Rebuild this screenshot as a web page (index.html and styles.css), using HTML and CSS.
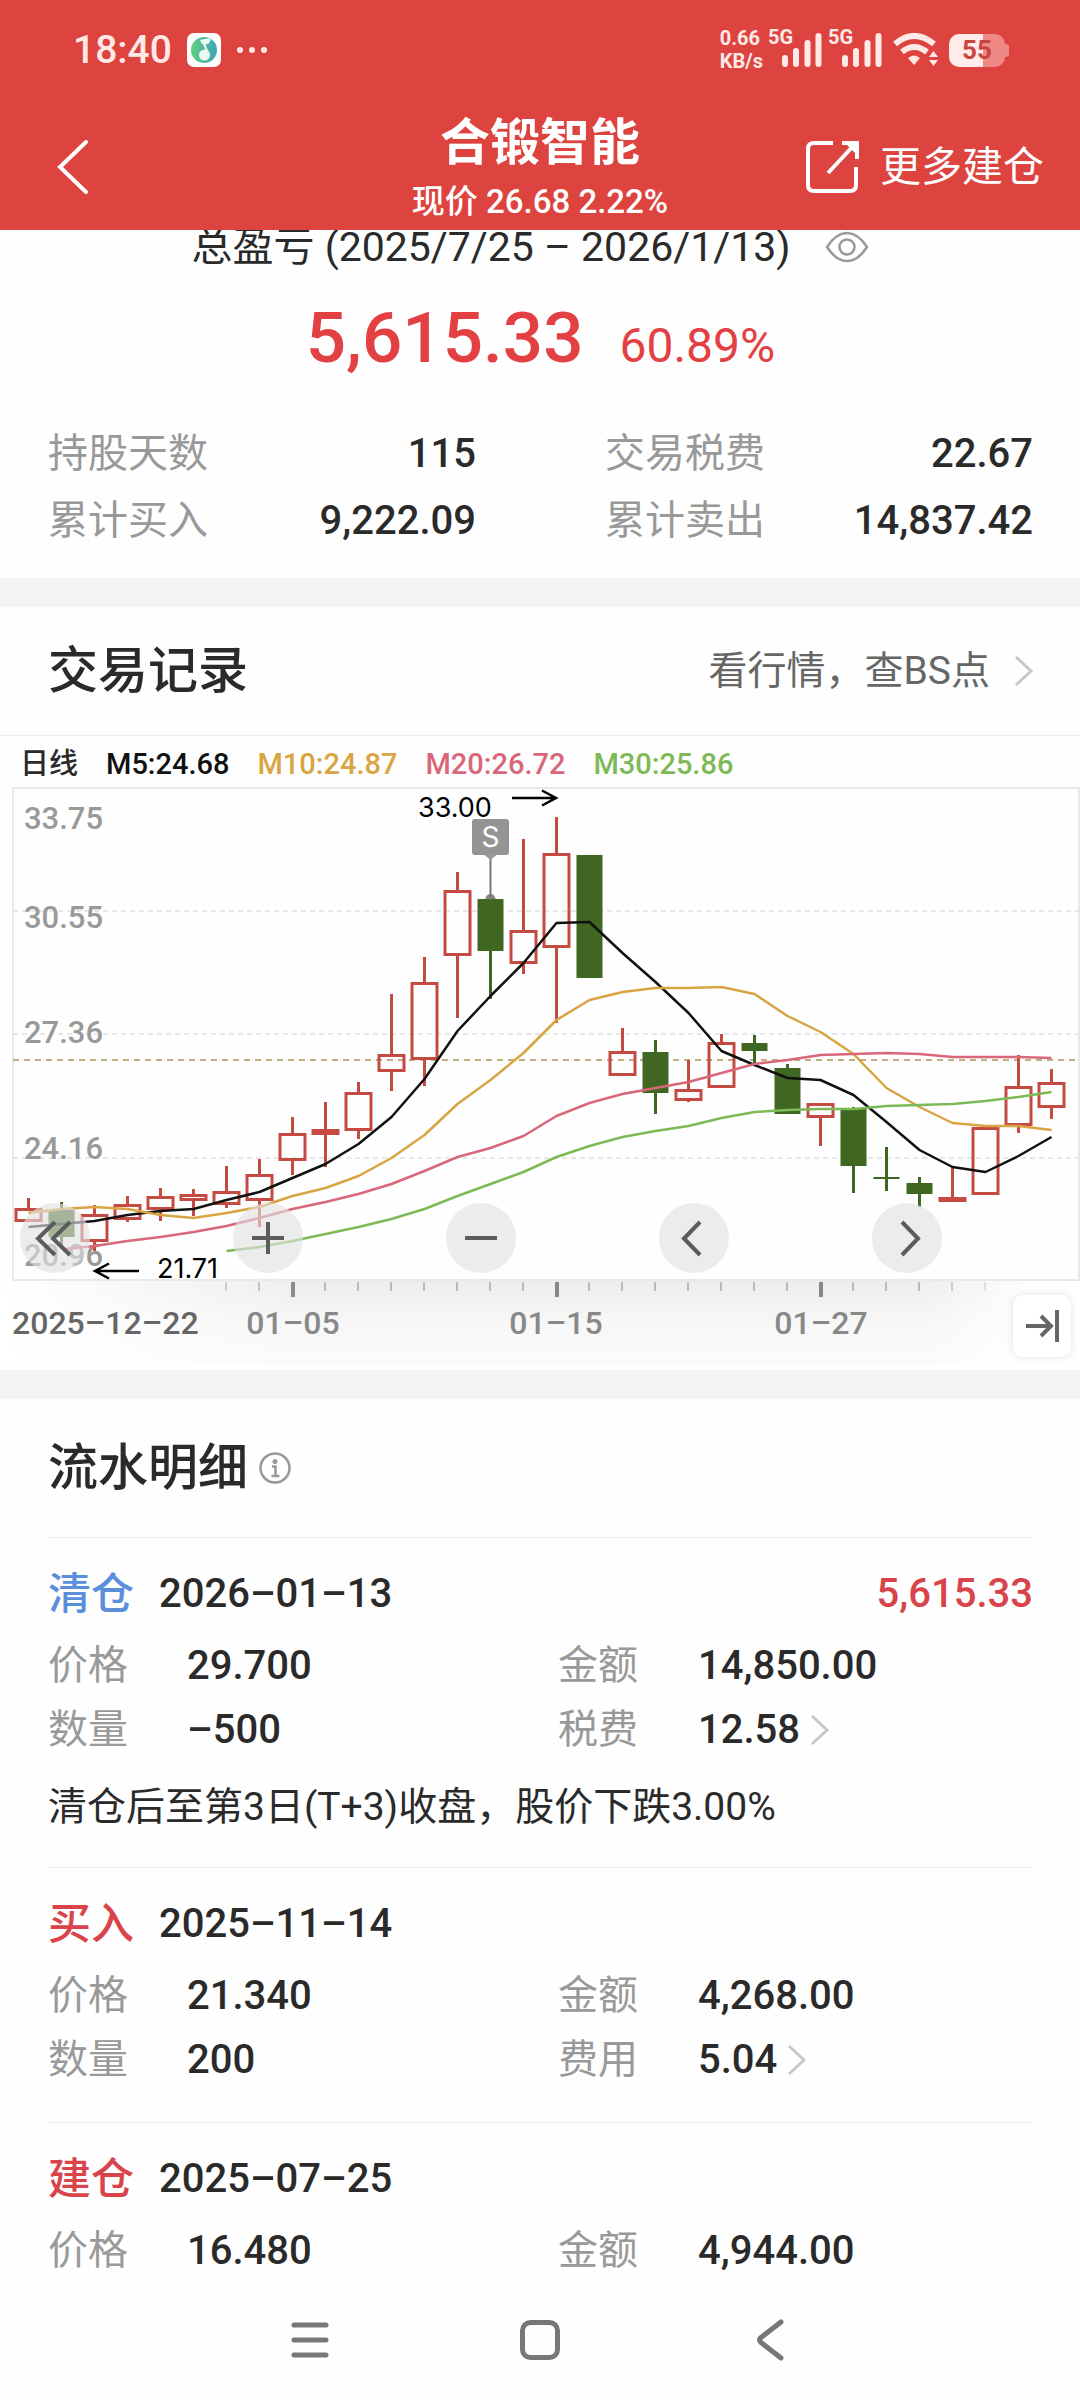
FILE: index.html
```html
<!DOCTYPE html>
<html lang="zh-CN">
<head>
<meta charset="utf-8">
<meta name="viewport" content="width=device-width, initial-scale=1">
<title>合锻智能</title>
<link rel="stylesheet" href="styles.css">
</head>
<body>
<header class="top">
  <div class="status">
    <span class="clock">18:40</span>
    <svg class="music" width="34" height="34" viewBox="0 0 34 34" aria-hidden="true">
      <defs><linearGradient id="disc" x1="0" x2="1"><stop offset="0" stop-color="#62cf80"/><stop offset="1" stop-color="#3fa3b8"/></linearGradient></defs>
      <rect width="34" height="34" rx="7" fill="#fff"/>
      <circle cx="17" cy="17" r="13" fill="url(#disc)"/>
      <path d="M23 6l-2 4-4 1 4 9" fill="none" stroke="#eafaf2" stroke-width="2"/>
      <path d="M13 7l10-2-3 5-5 1z" fill="#eafaf2"/>
      <circle cx="17.500" cy="22" r="5.500" fill="#eafaf2"/>
    </svg>
    <svg class="dots" width="30" height="8" viewBox="0 0 30 8" aria-hidden="true"><g fill="#ffe9e7"><circle cx="3" cy="4" r="3"/><circle cx="15" cy="4" r="3"/><circle cx="27" cy="4" r="3"/></g></svg>
    <span class="rate"><span>0.66</span><span>KB/s</span></span>
    <span class="cell">5G</span>
    <svg class="bars" width="40" height="34" viewBox="0 0 40 34" aria-hidden="true"><path d="M3 25v6M14 18v13M25.500 10v21M36.500 3v28" stroke="#ffe9e7" stroke-width="6" stroke-linecap="round"/></svg>
    <span class="cell second">5G</span>
    <svg class="bars" width="40" height="34" viewBox="0 0 40 34" aria-hidden="true"><path d="M3 25v6M14 18v13M25.500 10v21M36.500 3v28" stroke="#ffe9e7" stroke-width="6" stroke-linecap="round"/></svg>
    <svg class="wifi" width="46" height="34" viewBox="0 0 46 34" aria-hidden="true">
      <path d="M2 11q19-16 39 0M9 19q12-10 25 0" fill="none" stroke="#ffe9e7" stroke-width="6"/>
      <path d="M15 25q6-5 12 0l-6 7zM36 24l4.500-6 4.500 6zM36 27l4.500 6 4.500-6z" fill="#ffe9e7"/>
    </svg>
    <span class="battery">55</span>
  </div>
  <div class="titlebar">
    <button class="back" type="button" aria-label="返回"><svg width="34" height="58" viewBox="0 0 34 58"><path d="M30 4L4 29l26 25" fill="none" stroke="#fff" stroke-width="4" stroke-linecap="round"/></svg></button>
    <div class="name">
      <h1>合锻智能</h1>
      <p>现价 26.68 2.22%</p>
    </div>
    <a class="more" href="#more">
      <svg width="54" height="54" viewBox="0 0 54 54" aria-hidden="true"><g fill="none" stroke="#fff" stroke-width="4"><path d="M27 3H8q-6 0-6 6v36q0 6 6 6h36q6 0 6-6V27"/><path d="M36 3h15v16M50 3L22 33"/></g><path d="M38 2h14v14z" fill="#fff"/></svg>
      <span>更多建仓</span>
    </a>
  </div>
</header>

<main>
  <section class="summary">
    <div class="period">
      <h2>总盈亏 (2025/7/25 – 2026/1/13)</h2>
      <button type="button" aria-label="隐藏金额"><svg width="44" height="32" viewBox="0 0 44 32"><g fill="none" stroke="#999" stroke-width="2.500"><path d="M2 16Q11 2 22 2t20 14Q33 30 22 30T2 16z"/><circle cx="22" cy="16" r="7.500"/></g></svg></button>
    </div>
    <p class="profit"><strong>5,615.33</strong><span>60.89%</span></p>
    <dl class="stats">
      <div><dt>持股天数</dt><dd>115</dd></div>
      <div><dt>交易税费</dt><dd>22.67</dd></div>
      <div><dt>累计买入</dt><dd>9,222.09</dd></div>
      <div><dt>累计卖出</dt><dd>14,837.42</dd></div>
    </dl>
  </section>

  <section class="records">
    <div class="section-head ruled">
      <h2>交易记录</h2>
      <a class="quote" href="#quote"><span>看行情，查BS点</span><svg width="20" height="32" viewBox="0 0 20 32" aria-hidden="true"><path d="M2 2l15 14L2 30" fill="none" stroke="#c8c8c8" stroke-width="3"/></svg></a>
    </div>
    <div class="legend"><span>日线</span><span class="m5">M5:24.68</span><span class="m10">M10:24.87</span><span class="m20">M20:26.72</span><span class="m30">M30:25.86</span></div>
    <div class="chart">
      <svg class="plot" viewBox="0 786 1080 584" role="img" aria-label="日线K线图">
        <defs>
          <linearGradient id="axis" x1="0" x2="0" y1="0" y2="1"><stop offset="0" stop-color="#eee"/><stop offset=".5" stop-color="#f7f7f7"/><stop offset="1" stop-color="#fbfbfb"/></linearGradient>
          <linearGradient id="fadeL"><stop offset="0" stop-color="#fff"/><stop offset="1" stop-color="#fff" stop-opacity="0"/></linearGradient>
          <linearGradient id="fadeR"><stop offset="0" stop-color="#fff" stop-opacity="0"/><stop offset="1" stop-color="#fff"/></linearGradient>
        </defs>
        <rect x="0" y="1281" width="1080" height="83" fill="url(#axis)"/>
        <path d="M259 1282v9M325 1282v9M358 1282v9M391 1282v9M424 1282v9M457 1282v9M490 1282v9M523 1282v9M589 1282v9M622 1282v9M655 1282v9M688 1282v9M721 1282v9M754 1282v9M787 1282v9M853 1282v9M886 1282v9M919 1282v9M952 1282v9M985 1282v9M226 1282v9" stroke="#bbb" stroke-width="2"/>
        <path d="M293 1282v15M557 1282v15M821 1282v15" stroke="#888" stroke-width="4"/>
        <rect x="0" y="1281" width="300" height="83" fill="url(#fadeL)"/>
        <rect x="920" y="1281" width="120" height="83" fill="url(#fadeR)"/>
        <rect x="1040" y="1281" width="40" height="83" fill="#fff"/>
        <rect x="13" y="788" width="1066" height="492" fill="none" stroke="#e9e9e9" stroke-width="2"/>
        <path d="M13 911h1066M13 1034h1066M13 1158h1066" stroke="#e0e0e0" stroke-width="1.500" stroke-dasharray="5 4"/>
        <path d="M13 1060h1066" stroke="#bfae80" stroke-width="2" stroke-dasharray="6 5"/>
        <g class="price"><text x="24" y="829">33.75</text><text x="24" y="928">30.55</text><text x="24" y="1043">27.36</text><text x="24" y="1159">24.16</text><text x="24" y="1266">20.96</text></g>
        <g fill="none" stroke="#c44a42" stroke-width="3">
          <path d="M28.500 1198v10M94.500 1205v9M94.500 1242v9M127.500 1196v8M127.500 1220v2M160.500 1188v8M160.500 1210v11M193.500 1189v5M193.500 1201v15M226.500 1166v25M226.500 1205v3M259.500 1159v15M259.500 1201v26M292.500 1117v16M292.500 1161v14M325.500 1102v65M358.500 1082v10M358.500 1131v8M391.500 994v60M391.500 1072v19M424.500 957v25M424.500 1060v26M457.500 872v18M457.500 956v62M523.500 839v91M523.500 964v10M556.500 817v36M556.500 948v75M622.500 1028v23M688.500 1060v29M688.500 1101v1M721.500 1034v8M820.500 1118v28M952.500 1167v30M1018.500 1055v31M1018.500 1126v7M1051.500 1069v13M1051.500 1108v11"/>
          <path d="M16 1209.500h25v11h-25zM82 1215.500h25v25h-25zM115 1205.500h25v13h-25zM148 1197.500h25v11h-25zM181 1195.500h25v4h-25zM214 1192.500h25v11h-25zM247 1175.500h25v24h-25zM280 1134.500h25v25h-25zM313 1130.500h25v3h-25zM346 1093.500h25v36h-25zM379 1055.500h25v15h-25zM412 983.500h25v75h-25zM445 891.500h25v63h-25zM511 931.500h25v31h-25zM544 854.500h25v92h-25zM610 1052.500h25v22h-25zM676 1090.500h25v9h-25zM709 1043.500h25v43h-25zM808 1104.500h25v12h-25zM940 1198.500h25v2h-25zM973 1128.500h25v65h-25zM1006 1087.500h25v37h-25zM1039 1083.500h25v23h-25z"/>
        </g>
        <circle cx="490.500" cy="899" r="5" fill="#888"/>
        <path d="M61.500 1202v45M490.500 951v48M655.500 1040v74M754.500 1035v28M787.500 1064v4M853.500 1107v86M886.500 1147v44M919.500 1177v30" stroke="#3f6722" stroke-width="3"/>
        <path d="M48.500 1210h26v27h-26zM477.500 899h26v52h-26zM576.500 855h26v123h-26zM642.500 1052h26v41h-26zM741.500 1043h26v8h-26zM774.500 1068h26v46h-26zM840.500 1109h26v57h-26zM873.500 1177h26v2h-26zM906.500 1183h26v11h-26z" fill="#3f6722"/>
        <g fill="none" stroke-width="2.500" stroke-linejoin="round">
          <polyline stroke="#111" points="28.500,1227 61.500,1224 94.500,1221 127.500,1215 160.500,1211 193.500,1209 226.500,1200 259.500,1192 292.500,1178 325.500,1164 358.500,1144 391.500,1117 424.500,1079 457.500,1031 490.500,996 523.500,963 556.500,923 589.500,922 622.500,953 655.500,982 688.500,1013 721.500,1051 754.500,1065 787.500,1078 820.500,1080 853.500,1095 886.500,1122 919.500,1150 952.500,1167 985.500,1172 1018.500,1156 1051.500,1137"/>
          <polyline stroke="#d9a441" points="28.500,1213 61.500,1209 94.500,1207 127.500,1209 160.500,1215 193.500,1218 226.500,1213 259.500,1207 292.500,1196 325.500,1188 358.500,1176 391.500,1158 424.500,1135 457.500,1104 490.500,1080 523.500,1053 556.500,1020 589.500,1000 622.500,992 655.500,988 688.500,988 721.500,987 754.500,994 787.500,1016 820.500,1032 853.500,1054 886.500,1088 919.500,1107 952.500,1123 985.500,1126 1018.500,1126 1051.500,1130"/>
          <polyline stroke="#d9677a" points="66,1249 94.500,1246 127.500,1241 160.500,1237 193.500,1232 226.500,1226 259.500,1218 292.500,1209 325.500,1202 358.500,1194 391.500,1184 424.500,1171 457.500,1157 490.500,1148 523.500,1136 556.500,1116 589.500,1103 622.500,1094 655.500,1088 688.500,1082 721.500,1073 754.500,1064 787.500,1060 820.500,1055 853.500,1054 886.500,1053 919.500,1054 952.500,1057 985.500,1057 1018.500,1057 1051.500,1058"/>
          <polyline stroke="#7dba57" points="226.500,1251 259.500,1247 292.500,1241 325.500,1234 358.500,1227 391.500,1219 424.500,1209 457.500,1196 490.500,1184 523.500,1172 556.500,1157 589.500,1146 622.500,1137 655.500,1131 688.500,1126 721.500,1118 754.500,1112 787.500,1110 820.500,1109 853.500,1109 886.500,1106 919.500,1105 952.500,1104 985.500,1101 1018.500,1097 1051.500,1092"/>
        </g>
        <path d="M490.500 856v44" stroke="#777" stroke-width="2"/>
        <path d="M482 853h17l-8.500 7z" fill="#999"/>
        <rect x="472" y="819" width="37" height="36" rx="3" fill="#949494"/>
        <text class="sell" x="490.500" y="847">S</text>
        <g class="extreme"><text x="418" y="817">33.00</text><text x="157" y="1278">21.71</text></g>
        <path d="M512 798h44M542 790.500l14 7.500-14 7.500M139 1271H95M109 1263.500l-14 7.500 14 7.500" fill="none" stroke="#000" stroke-width="2.500"/>
        <g class="dates"><text class="first" x="12" y="1334">2025–12–22</text><text class="mid" x="293" y="1334">01–05</text><text class="mid" x="556" y="1334">01–15</text><text class="mid" x="821" y="1334">01–27</text></g>
      </svg>
      <div class="controls">
        <button type="button" aria-label="最早"><svg width="70" height="70" viewBox="0 0 70 70"><path d="M35 19L18 35.500 35 52M50 19L33 35.500 50 52"/></svg></button>
        <button type="button" aria-label="放大"><svg width="70" height="70" viewBox="0 0 70 70"><path d="M19 35h32M35 19v32"/></svg></button>
        <button type="button" aria-label="缩小"><svg width="70" height="70" viewBox="0 0 70 70"><path d="M19 35h32"/></svg></button>
        <button type="button" aria-label="向左"><svg width="70" height="70" viewBox="0 0 70 70"><path d="M41 19L25 35.500 41 52"/></svg></button>
        <button type="button" aria-label="向右"><svg width="70" height="70" viewBox="0 0 70 70"><path d="M30 19l16 16.500L30 52"/></svg></button>
      </div>
      <button class="latest" type="button" aria-label="最新"><svg width="34" height="36" viewBox="0 0 34 36"><path d="M1 18h25M16 8l10 10-10 10M32 2v32" fill="none" stroke="#666" stroke-width="4"/></svg></button>
    </div>
  </section>

  <section class="flow">
    <div class="section-head">
      <h2>流水明细</h2>
      <button class="info" type="button" aria-label="说明"><svg width="34" height="34" viewBox="0 0 34 34"><circle cx="17" cy="17" r="14.500" fill="none" stroke="#999" stroke-width="2.500"/><circle cx="17" cy="10.500" r="2.500" fill="#999"/><path d="M14 15.500h3.500V25M13.500 25h8" fill="none" stroke="#999" stroke-width="2.500"/></svg></button>
    </div>
    <article class="entry">
      <h3><span class="close">清仓</span><time datetime="2026-01-13">2026–01–13</time><b>5,615.33</b></h3>
      <dl><dt>价格</dt><dd>29.700</dd><dt>金额</dt><dd>14,850.00</dd>
        <dt>数量</dt><dd>–500</dd><dt>税费</dt><dd><a href="#fee1">12.58<svg width="20" height="32" viewBox="0 0 20 32" aria-hidden="true"><path d="M2 2l15 14L2 30" fill="none" stroke="#c8c8c8" stroke-width="3"/></svg></a></dd></dl>
      <p>清仓后至第3日(T+3)收盘，股价下跌3.00%</p>
    </article>
    <article class="entry">
      <h3><span class="open">买入</span><time datetime="2025-11-14">2025–11–14</time></h3>
      <dl><dt>价格</dt><dd>21.340</dd><dt>金额</dt><dd>4,268.00</dd>
        <dt>数量</dt><dd>200</dd><dt>费用</dt><dd><a href="#fee2">5.04<svg width="20" height="32" viewBox="0 0 20 32" aria-hidden="true"><path d="M2 2l15 14L2 30" fill="none" stroke="#c8c8c8" stroke-width="3"/></svg></a></dd></dl>
    </article>
    <article class="entry last">
      <h3><span class="open">建仓</span><time datetime="2025-07-25">2025–07–25</time></h3>
      <dl><dt>价格</dt><dd>16.480</dd><dt>金额</dt><dd>4,944.00</dd></dl>
    </article>
  </section>
</main>

<nav class="system">
  <button type="button" aria-label="最近任务"><svg width="44" height="44" viewBox="0 0 44 44"><path d="M6 7h32M6 22h32M6 37h32"/></svg></button>
  <button type="button" aria-label="主屏幕"><svg width="44" height="44" viewBox="0 0 44 44"><rect x="4.500" y="4.500" width="35" height="35" rx="8"/></svg></button>
  <button type="button" aria-label="后退"><svg width="44" height="44" viewBox="0 0 44 44"><path d="M33 4L13 19.500q-3 2.500 0 5L33 40"/></svg></button>
</nav>
</body>
</html>
```
FILE: styles.css
```css
* { box-sizing: border-box; }
body {
  margin: 0;
  min-height: 100vh;
  background: #fefefe;
  color: #2a2a2a;
  font-family: Roboto, "Noto Sans CJK SC", sans-serif;
  font-size: 40px;
}
h1, h2, h3, p, dl, dd { margin: 0; font-weight: 400; }
button { padding: 0; border: 0; background: none; display: block; }
svg { display: block; }
a { color: inherit; text-decoration: none; }

.top { position: relative; z-index: 1; background: #dd443f; color: #fff; }
.status { display: flex; align-items: center; height: 100px; padding: 0 75px 0 73px; color: #ffe9e7; }
.clock { font-size: 39px; font-weight: 500; width: 98px; }
.music { margin-left: 16px; }
.dots { margin-left: 16px; }
.rate { display: grid; margin-left: auto; font-size: 20px; line-height: 23px; font-weight: 700; }
.cell { align-self: flex-start; margin: 26px 0 0 5px; font-size: 20px; line-height: 23px; font-weight: 700; width: 14px; }
.cell.second { margin-left: 6px; }
.bars { flex: none; }
.wifi { margin-left: 11px; }
.battery {
  position: relative;
  margin-left: 10px;
  width: 56px;
  height: 33px;
  border-radius: 10px;
  background: linear-gradient(90deg, #ffebe9 60%, #ee8985 60%);
  color: #c9443f;
  font-size: 26px;
  line-height: 33px;
  font-weight: 700;
  text-align: center;
}
.battery::after { content: ""; position: absolute; right: -4px; top: 10px; width: 4px; height: 13px; border-radius: 0 3px 3px 0; background: #ee8985; }

.titlebar { display: grid; grid-template-columns: 1fr auto 1fr; align-items: center; height: 130px; padding: 4px 36px 0 56px; }
.name { text-align: center; margin-left: -20px; padding-top: 6px; }
.name h1 { font-size: 50px; line-height: 64px; font-weight: 700; }
.name p { font-size: 33px; line-height: 54px; font-weight: 500; }
.more { justify-self: end; display: flex; align-items: center; gap: 20px; font-size: 41px; line-height: 54px; }

.summary { margin-top: -8px; padding: 0 47px 24px 48px; border-bottom: 29px solid #f4f4f4; }
.period { display: flex; align-items: center; justify-content: center; gap: 35px; margin-right: 20px; }
.period h2 { font-size: 41px; line-height: 50px; }
.profit { display: flex; align-items: baseline; justify-content: center; gap: 36px; margin-top: 21px; line-height: 90px; color: #e24043; }
.profit strong { font-size: 71px; font-weight: 500; }
.profit span { font-size: 48px; }
.stats { display: grid; grid-template-columns: 1fr 1fr; column-gap: 129px; margin-top: 29px; line-height: 67px; }
.stats div { display: flex; justify-content: space-between; }
dt { color: #999; }
dd { font-weight: 500; }

.section-head { display: flex; align-items: center; height: 128px; padding: 0 48px; }
.section-head h2 { font-size: 50px; line-height: 64px; font-weight: 500; }
.ruled { height: 129px; border-bottom: 1px solid #ececec; }
.quote { display: flex; align-items: center; gap: 24px; margin-left: auto; margin-right: -2px; color: #666; font-size: 39px; line-height: 50px; }
.legend { display: flex; gap: 28px; height: 50px; padding: 6px 20px 0; line-height: 44px; font-size: 29px; font-weight: 500; }
.m5 { color: #111; }
.m10 { color: #d9a441; }
.m20 { color: #d9677a; }
.m30 { color: #7dba57; }

.records { border-bottom: 29px solid #f4f4f4; }
.chart { position: relative; }
.plot { width: 100%; height: auto; }
.price { font-size: 31px; font-weight: 500; fill: #999; }
.extreme { font-family: Inter, "Noto Sans CJK SC", sans-serif; font-size: 27px; fill: #000; }
.sell { font-family: Inter, sans-serif; font-size: 28px; fill: #fff; text-anchor: middle; }
.dates { font-size: 32px; font-weight: 500; fill: #888; }
.first { fill: #666; }
.mid { text-anchor: middle; }
.controls { position: absolute; left: 20px; right: 138px; bottom: 97px; display: flex; justify-content: space-between; }
.controls button { border-radius: 50%; background: rgba(225, 225, 225, .63); }
.controls path { fill: none; stroke: #5c5c5c; stroke-width: 4px; }
.latest { position: absolute; right: 9px; bottom: 13px; width: 58px; height: 62px; border-radius: 10px; background: #fff; box-shadow: 0 0 8px rgba(0, 0, 0, .12); }
.latest svg { margin: auto; }

.flow .section-head { height: 138px; gap: 10px; }
.entry { margin: 0 47px 0 48px; padding: 16px 0 30px; border-top: 1px solid #ececec; }
.entry h3 { display: flex; align-items: center; gap: 25px; line-height: 80px; font-size: 40px; font-weight: 500; }
.entry h3 span { font-size: 43px; }
.entry h3 b { margin-left: auto; font-weight: 500; color: #d9434a; }
.close { color: #5b8fdb; }
.open { color: #d9434a; }
.entry dl { display: grid; grid-template-columns: 139px 371px 140px 1fr; line-height: 64px; }
.entry dd a { display: flex; align-items: center; gap: 10px; }
.entry p { margin-top: 15px; font-size: 39px; line-height: 60px; }
.entry.last { padding-bottom: 0; }

.system { display: flex; align-items: center; justify-content: center; gap: 186px; height: 114px; }
.system svg { fill: none; stroke: #777; stroke-width: 5px; stroke-linecap: round; }
```
